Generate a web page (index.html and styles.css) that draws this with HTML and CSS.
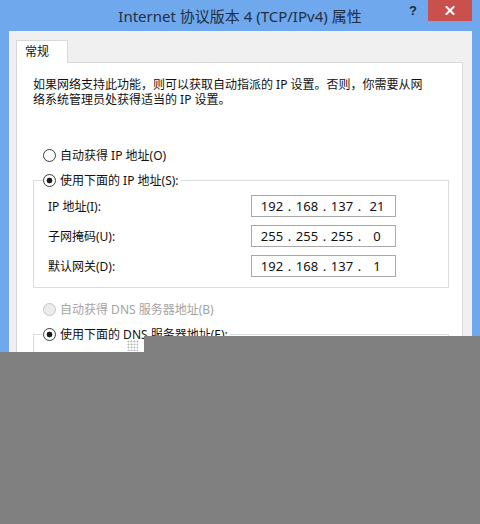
FILE: index.html
```html
<!DOCTYPE html>
<html lang="zh-CN">
<head>
<meta charset="utf-8">
<title>Internet 协议版本 4 (TCP/IPv4) 属性</title>
<link rel="stylesheet" href="styles.css">
</head>
<body>
<div class="window">
  <header class="titlebar">
    <span class="spacer"></span>
    <h1 class="title">Internet 协议版本 4 (TCP/IPv4) 属性</h1>
    <div class="controls">
      <span class="help">?</span>
      <span class="close">
        <svg width="10" height="9" viewBox="0 0 10 9" aria-hidden="true">
          <path d="M1.5 1 L8.5 8 M8.5 1 L1.5 8" stroke="#fff" stroke-width="2" stroke-linecap="square" fill="none"/>
        </svg>
      </span>
    </div>
  </header>

  <div class="client">
    <div class="tabs">
      <div class="tab">常规</div>
    </div>
    <div class="page">
      <p class="intro">如果网络支持此功能，则可以获取自动指派的 IP 设置。否则，你需要从网<br>络系统管理员处获得适当的 IP 设置。</p>

      <label class="radio"><span class="dot"></span>自动获得 IP 地址(O)</label>
      <fieldset class="group">
        <legend class="radio"><span class="dot on"></span>使用下面的 IP 地址(S):</legend>
        <div class="row">
          <span>IP 地址(I):</span>
          <div class="ip"><span>192</span><i>.</i><span>168</span><i>.</i><span>137</span><i>.</i><span>21</span></div>
        </div>
        <div class="row">
          <span>子网掩码(U):</span>
          <div class="ip"><span>255</span><i>.</i><span>255</span><i>.</i><span>255</span><i>.</i><span>0</span></div>
        </div>
        <div class="row">
          <span>默认网关(D):</span>
          <div class="ip"><span>192</span><i>.</i><span>168</span><i>.</i><span>137</span><i>.</i><span>1</span></div>
        </div>
      </fieldset>

      <label class="radio disabled"><span class="dot"></span>自动获得 DNS 服务器地址(B)</label>
      <fieldset class="group">
        <legend class="radio"><span class="dot on"></span>使用下面的 DNS 服务器地址(E):</legend>
        <div class="row">
          <span>首选 DNS 服务器(P):</span>
          <div class="ip"><span></span><i>.</i><span></span><i>.</i><span></span><i>.</i><span></span></div>
        </div>
        <div class="row">
          <span>备用 DNS 服务器(A):</span>
          <div class="ip"><span></span><i>.</i><span></span><i>.</i><span></span><i>.</i><span></span></div>
        </div>
      </fieldset>
    </div>
  </div>
</div>

<!-- dimmed area lying over the lower part of the dialog -->
<div class="shade shade-step"></div>
<div class="shade shade-main"></div>
<div class="grip"></div>
</body>
</html>
```

FILE: styles.css
```css
html, body {
  margin: 0;
  padding: 0;
}

body {
  width: 480px;
  height: 524px;
  overflow: hidden;
  position: relative;
  background: #6fa8ec;
  font-family: "Noto Sans", "Noto Sans CJK SC", sans-serif;
  font-size: 12px;
  color: #111;
}

.window {
  height: 524px;
  display: flex;
  flex-direction: column;
  background: #6fa8ec;
}

/* title bar */
.titlebar {
  flex: none;
  height: 31px;
  display: grid;
  grid-template-columns: 1fr auto 1fr;
  align-items: start;
}

.title {
  margin: 0;
  padding-top: 6px;
  font-size: 15px;
  font-weight: normal;
  line-height: 20px;
  color: #1f2f46;
  white-space: nowrap;
}

.controls {
  display: flex;
  justify-content: flex-end;
  padding-right: 8px;
}

.help {
  width: 30px;
  height: 21px;
  line-height: 22px;
  text-align: center;
  font-family: "Liberation Sans", sans-serif;
  font-weight: bold;
  font-size: 13px;
  color: #1b2a3f;
}

.close {
  width: 44px;
  height: 21px;
  background: #c9504c;
  display: flex;
  align-items: center;
  justify-content: center;
}

/* dialog client area */
.client {
  flex: 1;
  margin: 0 8px 0 9px;
  padding: 9px 9px 0 7px;
  background: #f0f0f0;
  display: flex;
  flex-direction: column;
}

.tabs {
  display: flex;
  height: 23px;
}

.tab {
  position: relative;
  z-index: 1;
  box-sizing: border-box;
  width: 52px;
  height: 23px;
  padding-left: 8px;
  line-height: 21px;
  background: #fff;
  border: 1px solid #d9d9d9;
  border-bottom: none;
}

.page {
  flex: 1;
  margin-top: -1px;
  padding: 14px 13px 0 16px;
  background: #fff;
  border: 1px solid #d9d9d9;
}

.intro {
  margin: 0;
  line-height: 15px;
}

/* radio buttons */
.radio {
  display: flex;
  align-items: center;
  gap: 4px;
  height: 20px;
  padding-left: 10px;
}

label.radio:first-of-type {
  margin-top: 38px;
}

.dot {
  box-sizing: border-box;
  width: 13px;
  height: 13px;
  border-radius: 50%;
  border: 1px solid #3c3c3c;
  background: #fff;
}

.dot.on {
  background: radial-gradient(circle, #1a1a1a 0 2.6px, #fff 3.2px);
}

.radio.disabled {
  margin-top: 11px;
  color: #a3a3a3;
}

.radio.disabled .dot {
  border-color: #c4c4c4;
  background: #ececec;
}

/* group boxes */
.group {
  margin: 5px 0 0;
  padding: 5px 52px 10px 0;
  min-width: 0;
  border: 1px solid #dcdcdc;
}

.group legend.radio {
  margin-left: 9px;
  padding: 0 2px 0 0;
}

.row {
  display: flex;
  justify-content: space-between;
  align-items: center;
  height: 22px;
  padding-left: 14px;
}

.row + .row {
  margin-top: 8px;
}

/* IP address field */
.ip {
  box-sizing: border-box;
  width: 145px;
  height: 22px;
  padding-left: 8px;
  display: flex;
  align-items: center;
  background: #fff;
  border: 1px solid #a9a9a9;
  font-family: "Noto Sans", sans-serif;
  font-size: 13px;
  color: #111;
}

.ip span {
  width: 24px;
  text-align: center;
}

.ip i {
  width: 11px;
  text-align: center;
  font-style: normal;
}

/* dimmed overlay */
.shade {
  position: absolute;
  background: #808080;
}

.shade-step {
  left: 144px;
  right: 0;
  top: 336px;
  height: 16px;
}

.shade-main {
  left: 0;
  right: 0;
  top: 352px;
  bottom: 0;
}

.grip {
  position: absolute;
  left: 127px;
  top: 340px;
  width: 11px;
  height: 11px;
  background: radial-gradient(circle, #b8b8b8 0 0.8px, transparent 1.2px) 0 0 / 3px 3px;
}
```
